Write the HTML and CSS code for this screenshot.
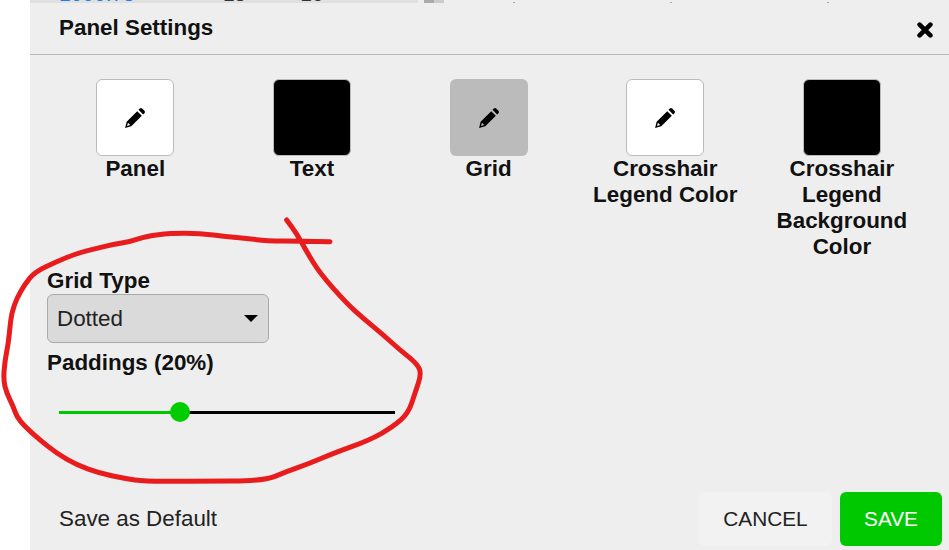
FILE: index.html
```html
<!DOCTYPE html>
<html lang="en">
<head>
    <meta charset="UTF-8">
    <meta name="viewport" content="width=device-width, initial-scale=1.0">
    <title>Panel Settings</title>
    <link rel="stylesheet" href="styles.css">
</head>
<body>
    <!-- sliver of the page behind the modal -->
    <div class="backdrop">
        <div class="backdrop-row">
            <span class="backdrop-link">1000.75</span>
            <span class="backdrop-num backdrop-num-first">15</span>
            <span class="backdrop-num backdrop-num-second">10</span>
        </div>
        <span class="backdrop-thumb"></span>
        <span class="tick tick-first"></span>
        <span class="tick"></span>
        <span class="tick"></span>
    </div>
    <div class="modal">
        <div class="modal-header">
            <span class="modal-title">Panel Settings</span>
            <svg class="close-icon" viewBox="0 0 16 16" aria-label="Close">
                <path d="M2.6 2.6 13.4 13.4M13.4 2.6 2.6 13.4"/>
            </svg>
        </div>

        <div class="colors">
            <div class="color-item">
                <div class="swatch swatch-white">
                    <svg class="pencil" viewBox="0 0 20 20"><path d="M13.2 2.6 14.4 1.4a1.5 1.5 0 0 1 2.1 0l2.1 2.1a1.5 1.5 0 0 1 0 2.1l-1.2 1.2ZM12 3.8 16.2 8 6.6 17.6 1 19l1.4-5.6ZM3.6 14.4 2.8 17.2 5.6 16.4Z" fill-rule="evenodd"/></svg>
                </div>
                <div class="color-label">Panel</div>
            </div>
            <div class="color-item">
                <div class="swatch swatch-black"></div>
                <div class="color-label">Text</div>
            </div>
            <div class="color-item">
                <div class="swatch swatch-grey">
                    <svg class="pencil" viewBox="0 0 20 20"><path d="M13.2 2.6 14.4 1.4a1.5 1.5 0 0 1 2.1 0l2.1 2.1a1.5 1.5 0 0 1 0 2.1l-1.2 1.2ZM12 3.8 16.2 8 6.6 17.6 1 19l1.4-5.6ZM3.6 14.4 2.8 17.2 5.6 16.4Z" fill-rule="evenodd"/></svg>
                </div>
                <div class="color-label">Grid</div>
            </div>
            <div class="color-item">
                <div class="swatch swatch-white">
                    <svg class="pencil" viewBox="0 0 20 20"><path d="M13.2 2.6 14.4 1.4a1.5 1.5 0 0 1 2.1 0l2.1 2.1a1.5 1.5 0 0 1 0 2.1l-1.2 1.2ZM12 3.8 16.2 8 6.6 17.6 1 19l1.4-5.6ZM3.6 14.4 2.8 17.2 5.6 16.4Z" fill-rule="evenodd"/></svg>
                </div>
                <div class="color-label">Crosshair Legend Color</div>
            </div>
            <div class="color-item">
                <div class="swatch swatch-black"></div>
                <div class="color-label color-label-narrow">Crosshair Legend Background Color</div>
            </div>
        </div>

        <div class="settings">
            <div class="field-label">Grid Type</div>
            <div class="select">
                <span>Dotted</span>
                <span class="select-arrow"></span>
            </div>
            <div class="field-label">Paddings (20%)</div>
            <div class="slider">
                <div class="slider-fill"></div>
                <div class="slider-rest"></div>
                <div class="slider-thumb"></div>
            </div>
        </div>

        <div class="modal-footer">
            <span class="save-default">Save as Default</span>
            <div class="footer-buttons">
                <button class="btn btn-cancel">CANCEL</button>
                <button class="btn btn-save">SAVE</button>
            </div>
        </div>
    </div>

    <!-- hand drawn annotation over the screenshot -->
    <svg class="scribble" viewBox="0 0 949 550">
        <path transform="translate(0 210) scale(0.3333)" d="M990 95Q900 93 850 93Q800 93 770 89Q740 85 710 82.5Q680 80 640 75Q600 70 555 70Q510 70 475 74Q440 78 415 86.5Q390 95 365 99Q340 103 315 109Q290 115 260 122.5Q230 130 200 142.5Q170 155 137.5 170Q105 185 90 203.5Q75 222 62.5 243.5Q50 265 42.5 287.5Q35 310 32.5 330Q30 350 27.5 375Q25 400 20 425Q15 450 12.5 480Q10 510 15 530Q20 550 30 570Q40 590 45 605Q50 620 62.5 635Q75 650 97.5 670Q120 690 145 710Q170 730 200 747.5Q230 765 265 777.5Q300 790 335 797.5Q370 805 405 810Q440 815 520 814Q600 813 695 813Q790 813 825 799Q860 785 895 772.5Q930 760 965 745Q1000 730 1055 710Q1110 690 1145 670Q1180 650 1202.5 630Q1225 610 1235 580Q1245 550 1255 520Q1265 490 1257.5 475Q1250 460 1225 440Q1200 420 1175 397.5Q1150 375 1120 350Q1090 325 1065 302.5Q1040 280 1000 235Q960 190 940 157.5Q920 125 905 97.5Q890 70 875 50L860 30"/>
    </svg>
</body>
</html>
```

FILE: styles.css
```css
* {
    margin: 0;
    padding: 0;
    box-sizing: border-box;
}

html,
body {
    height: 100%;
    overflow: hidden;
}

body {
    font-family: 'Liberation Sans', Arial, sans-serif;
    background: white;
    color: #111;
    padding-left: 30px;
    display: flex;
    flex-direction: column;
}

.backdrop {
    height: 3px;
    flex-shrink: 0;
    background: #eeeeee;
    display: flex;
    overflow: hidden;
}

.backdrop-row {
    width: 388px;
    height: 3px;
    background: #e0e0e0;
    display: flex;
    overflow: hidden;
    padding-left: 29px;
    font-size: 21px;
    line-height: 20px;
}

.backdrop-row span {
    margin-top: -16px;
}

.backdrop-link {
    color: #1a7fe8;
}

.backdrop-num {
    color: #333;
}

.backdrop-num-first {
    margin-left: 88px;
}

.backdrop-num-second {
    margin-left: 54px;
}

.backdrop-thumb {
    width: 20px;
    height: 3px;
    margin-left: 6px;
    background: linear-gradient(90deg, #aaa 50%, #ccc 50%);
}

.tick {
    width: 2px;
    height: 1px;
    margin: 2px 0 0 155px;
    background: #aaa;
}

.tick-first {
    margin-left: 69px;
}

.modal {
    flex: 1;
    background: #eeeeee;
    display: flex;
    flex-direction: column;
}

.modal-header {
    height: 52px;
    flex-shrink: 0;
    border-bottom: 1px solid #bbb;
    display: flex;
    justify-content: space-between;
    align-items: center;
    padding: 0 16px 2px 29px;
}

.modal-title {
    font-size: 22.4px;
    font-weight: bold;
}

.close-icon {
    width: 16px;
    height: 16px;
    margin-top: 4px;
    fill: none;
    stroke: black;
    stroke-width: 4.6;
    stroke-linecap: round;
}

.colors {
    display: flex;
    padding: 24px 0 0 17px;
}

.color-item {
    width: 176.65px;
    flex-shrink: 0;
    display: flex;
    flex-direction: column;
    align-items: center;
}

.swatch {
    width: 78px;
    height: 77px;
    border-radius: 6px;
    display: flex;
    align-items: center;
    justify-content: center;
}

.swatch-white {
    background: white;
    border: 1px solid #bbb;
}

.swatch-black {
    background: black;
    border: 1px solid #bbb;
}

.swatch-grey {
    background: #bbbbbb;
}

.pencil {
    width: 22px;
    height: 22px;
}

.color-label {
    max-width: 150px;
    font-size: 22.4px;
    font-weight: bold;
    line-height: 26px;
    text-align: center;
}

.color-label-narrow {
    max-width: 135px;
}

.settings {
    position: absolute;
    top: 266px;
    left: 47px;
    width: 348px;
}

.field-label {
    font-size: 22.4px;
    font-weight: bold;
    line-height: 27px;
    padding-top: 1px;
}

.select {
    width: 222px;
    height: 49px;
    background: #dadada;
    border: 1px solid #aaa;
    border-radius: 6px;
    display: flex;
    align-items: center;
    justify-content: space-between;
    padding: 0 10px 0 9px;
    font-size: 22.4px;
    color: #222;
    margin-bottom: 5px;
}

.select-arrow {
    border-left: 7px solid transparent;
    border-right: 7px solid transparent;
    border-top: 7px solid black;
}

.slider {
    display: flex;
    align-items: center;
    position: relative;
    height: 24px;
    margin: 24px 0 0 12px;
}

.slider-fill {
    width: 121px;
    height: 3px;
    background: #00c800;
}

.slider-rest {
    flex: 1;
    height: 3px;
    background: black;
}

.slider-thumb {
    position: absolute;
    left: 111px;
    top: 2px;
    width: 20px;
    height: 20px;
    border-radius: 50%;
    background: #00cc00;
}

.modal-footer {
    margin-top: auto;
    height: 58px;
    flex-shrink: 0;
    display: flex;
    justify-content: space-between;
    align-items: center;
    padding: 0 7px 4px 29px;
}

.save-default {
    font-size: 22.4px;
    color: #222;
}

.footer-buttons {
    display: flex;
    gap: 8px;
}

.btn {
    height: 54px;
    border: none;
    border-radius: 6px;
    font-family: inherit;
    font-size: 20.8px;
}

.btn-cancel {
    width: 133px;
    background: #f2f2f2;
    color: #222;
}

.btn-save {
    width: 102px;
    background: #00c800;
    color: white;
}

.scribble {
    position: absolute;
    top: 0;
    left: 0;
    width: 949px;
    height: 550px;
    fill: none;
    stroke: #e81c1c;
    stroke-width: 15;
    stroke-linecap: round;
    stroke-linejoin: round;
}
```
